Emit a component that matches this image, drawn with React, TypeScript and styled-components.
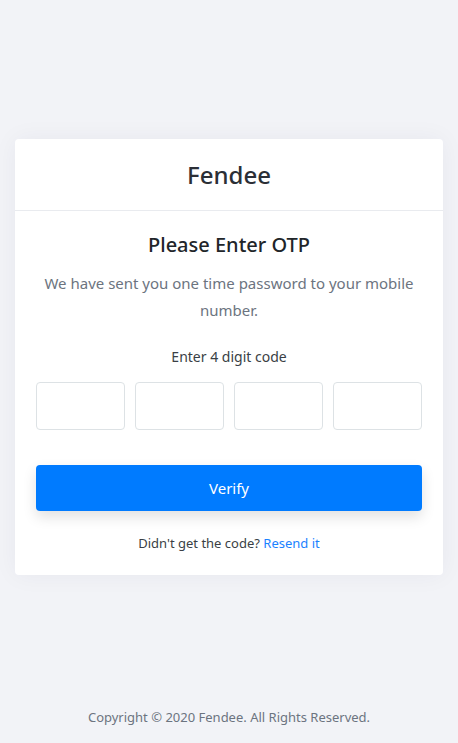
import React from 'react';
import styled, { createGlobalStyle } from 'styled-components';

const GlobalStyle = createGlobalStyle`
  * { box-sizing: border-box; }
  html, body { margin: 0; padding: 0; }
  body {
    background: #f2f3f7;
    font-family: 'Noto Sans', 'Open Sans', sans-serif;
    color: #333;
  }
`;

export default function App() {
  return (
    <>
      <GlobalStyle />
      <Page>
        <Main>
          <Card>
            <CardHeader>
              <Brand>Fendee</Brand>
            </CardHeader>
            <CardBody>
              <Title>Please Enter OTP</Title>
              <Description>
                We have sent you one time password to your mobile number.
              </Description>
              <Label>Enter 4 digit code</Label>
              <CodeRow>
                {[0, 1, 2, 3].map((i) => (
                  <CodeInput key={i} maxLength={1} />
                ))}
              </CodeRow>
              <VerifyButton>Verify</VerifyButton>
              <Resend>
                Didn't get the code? <ResendLink href="#">Resend it</ResendLink>
              </Resend>
            </CardBody>
          </Card>
        </Main>
        <Footer>Copyright © 2020 Fendee. All Rights Reserved.</Footer>
      </Page>
    </>
  );
}

const Page = styled.div`
  min-height: 100vh;
  display: flex;
  flex-direction: column;
`;

const Main = styled.main`
  flex: 1;
  display: flex;
  align-items: center;
  justify-content: center;
  padding: 12px 15px 0;
`;

const Card = styled.div`
  width: 100%;
  background: #fff;
  border-radius: 4px;
  box-shadow: 0 0 24px rgba(30, 40, 80, 0.05);
`;

const CardHeader = styled.div`
  height: 72px;
  display: flex;
  align-items: center;
  justify-content: center;
  border-bottom: 1px solid #e9ebef;
`;

const Brand = styled.h1`
  margin: 0;
  font-size: 24px;
  font-weight: 500;
  color: #2b2f36;
`;

const CardBody = styled.div`
  padding: 20px 21px 23px;
  display: flex;
  flex-direction: column;
  align-items: center;
`;

const Title = styled.h2`
  margin: 0 0 12px;
  font-size: 20px;
  font-weight: 500;
  color: #212529;
`;

const Description = styled.p`
  margin: 0 0 23px;
  font-size: 15px;
  line-height: 27px;
  text-align: center;
  color: #6c7480;
`;

const Label = styled.div`
  font-size: 14px;
  color: #3a3f45;
  margin-bottom: 16px;
`;

const CodeRow = styled.div`
  width: 100%;
  display: grid;
  grid-template-columns: repeat(4, 1fr);
  gap: 10px;
`;

const CodeInput = styled.input`
  height: 48px;
  width: 100%;
  border: 1px solid #dde2e5;
  border-radius: 4px;
  outline: none;
  text-align: center;
  font-size: 18px;
`;

const VerifyButton = styled.button`
  margin-top: 35px;
  width: 100%;
  height: 46px;
  border: none;
  border-radius: 4px;
  background: #007bff;
  color: #fff;
  font-family: inherit;
  font-size: 15px;
  box-shadow: 0 6px 14px rgba(0, 0, 0, 0.12);
`;

const Resend = styled.p`
  margin: 23px 0 0;
  font-size: 13px;
  color: #3a3f45;
`;

const ResendLink = styled.a`
  color: #1a82ff;
  text-decoration: none;
`;

const Footer = styled.footer`
  text-align: center;
  font-size: 13px;
  color: #6c7480;
  padding: 6px 0 17px;
`;
